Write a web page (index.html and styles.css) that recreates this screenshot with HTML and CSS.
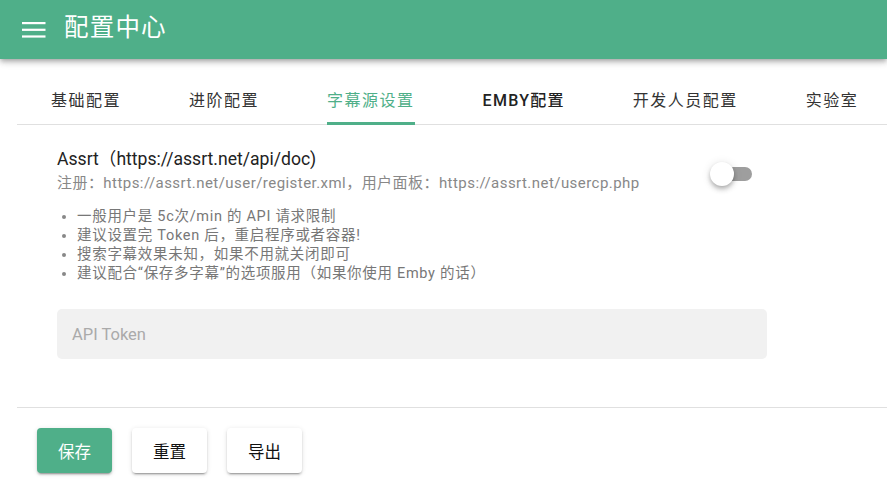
FILE: index.html
```html
<!DOCTYPE html>
<html lang="zh">
<head>
<meta charset="utf-8">
<title>配置中心</title>
<link rel="stylesheet" href="styles.css">
</head>
<body>
<header class="appbar">
  <button class="menu-btn" aria-label="menu">
    <svg width="24" height="16" viewBox="0 0 24 16"><rect x="0" y="0" width="23.5" height="2.2" fill="#fff"/><rect x="0" y="6.7" width="23.5" height="2.2" fill="#fff"/><rect x="0" y="13.4" width="23.5" height="2.2" fill="#fff"/></svg>
  </button>
  <h1 class="title">配置中心</h1>
</header>
<main class="main">
  <nav class="tabs">
    <div class="tab">基础配置</div>
    <div class="tab">进阶配置</div>
    <div class="tab tab--active">字幕源设置</div>
    <div class="tab tab--latin">EMBY配置</div>
    <div class="tab">开发人员配置</div>
    <div class="tab">实验室</div>
  </nav>
  <section class="panel">
    <div class="row">
      <div class="info">
        <div class="heading">Assrt（https://assrt.net/api/doc)</div>
        <div class="sub">注册：https://assrt.net/user/register.xml，用户面板：https://assrt.net/usercp.php</div>
      </div>
      <div class="switch"><span class="track"></span><span class="thumb"></span></div>
    </div>
    <ul class="notes">
      <li>一般用户是 5c次/min 的 API 请求限制</li>
      <li>建议设置完 Token 后，重启程序或者容器!</li>
      <li>搜索字幕效果未知，如果不用就关闭即可</li>
      <li>建议配合“保存多字幕”的选项服用（如果你使用 Emby 的话）</li>
    </ul>
    <div class="field"><span class="placeholder">API Token</span></div>
  </section>
  <footer class="actions">
    <button class="btn btn--primary">保存</button>
    <button class="btn">重置</button>
    <button class="btn">导出</button>
  </footer>
</main>
</body>
</html>
```
FILE: styles.css
```css
* { box-sizing: border-box; }
html, body { margin: 0; padding: 0; background: #fff; }
body {
  font-family: Roboto, "Noto Sans CJK SC", sans-serif;
  width: 887px;
  height: 502px;
  overflow: hidden;
}
.appbar {
  height: 59px;
  background: #4faf89;
  display: flex;
  align-items: center;
  padding-left: 22px;
  box-shadow: 0 2px 4px -1px rgba(0,0,0,.2), 0 4px 5px 0 rgba(0,0,0,.14), 0 1px 10px 0 rgba(0,0,0,.12);
  position: relative;
  z-index: 2;
}
.menu-btn {
  background: none; border: 0; padding: 0; margin: 0;
  width: 24px; height: 16px; display: block;
}
.menu-btn svg { display: block; }
.title {
  margin: 0 0 0 18px;
  color: #fff;
  font-size: 24.5px;
  font-weight: 400;
  letter-spacing: 1.2px;
  line-height: 1;
  padding-bottom: 2px;
}
.main { padding: 26px 0 0 17px; }
.tabs {
  display: flex;
  border-bottom: 1px solid #e0e0e0;
  height: 40px;
  padding-left: 34px;
}
.tab {
  font-size: 16px;
  letter-spacing: 1.5px;
  color: #333;
  line-height: 20px;
  padding-top: 6px;
  margin-right: 68px;
  position: relative;
  white-space: nowrap;
}
.tab--latin { font-weight: 500; color: #222; letter-spacing: 1.3px; }
.tab--active { color: #4faf89; }
.tab--active::after {
  content: "";
  position: absolute;
  left: 0; right: 0; bottom: -1px;
  height: 3px;
  background: #4faf89;
}
.panel { padding: 24px 0 0 40px; height: 283px; border-bottom: 1px solid #e0e0e0; }
.row { display: flex; align-items: flex-start; }
.info { width: 653px; }
.heading { font-size: 17.6px; color: #222; line-height: 20px; }
.sub { font-size: 15px; color: #888; line-height: 18px; margin-top: 5px; letter-spacing: 0.45px; white-space: nowrap; }
.switch { position: relative; width: 42px; height: 24px; margin-top: 13px; }
.track {
  position: absolute; left: 8px; top: 5px; width: 34px; height: 14px;
  border-radius: 7px; background: #9e9e9e;
}
.thumb {
  position: absolute; left: 0; top: 0; width: 24px; height: 24px; border-radius: 50%;
  background: #fff;
  box-shadow: 0 2px 4px -1px rgba(0,0,0,.2), 0 4px 5px 0 rgba(0,0,0,.14), 0 1px 10px 0 rgba(0,0,0,.12);
}
.notes {
  margin: 15px 0 0 0;
  padding-left: 20px;
  font-size: 14.5px;
  letter-spacing: 0.7px;
  color: #777;
  line-height: 18px;
  white-space: nowrap;
}
.notes li::marker { color: #888; font-size: 14px; }
.field {
  margin-top: 26px;
  width: 710px; height: 50px;
  background: #f1f1f1;
  border-radius: 5px;
  display: flex; align-items: center;
  padding-left: 15px;
}
.placeholder { font-size: 16.5px; color: #aaa; }
.actions { display: flex; gap: 20px; padding: 20px 0 0 20px; }
.btn {
  width: 75px; height: 45px;
  border: 0; border-radius: 4px;
  background: #fff; color: #111;
  font-family: Roboto, "Noto Sans CJK SC", sans-serif;
  font-size: 16.5px;
  box-shadow: 0 3px 1px -2px rgba(0,0,0,.2), 0 2px 2px 0 rgba(0,0,0,.14), 0 1px 5px 0 rgba(0,0,0,.12);
}
.btn--primary { background: #4faf89; color: #fff; }
```
